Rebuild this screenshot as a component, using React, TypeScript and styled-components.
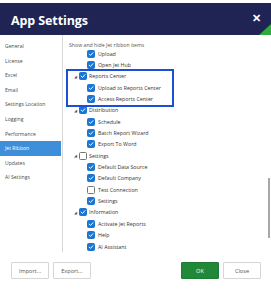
import styled, { createGlobalStyle } from "styled-components";

const GlobalStyle = createGlobalStyle`
  html, body {
    margin: 0;
    padding: 0;
    background: #ffffff;
  }
  body {
    font-family: "Open Sans", "Noto Sans", sans-serif;
  }
`;

const Dialog = styled.div`
  width: 271px;
  height: 290px;
  padding-top: 3px;
  box-sizing: border-box;
  display: flex;
  flex-direction: column;
  background: #ffffff;
  overflow: hidden;
`;

const Header = styled.div`
  position: relative;
  height: 32px;
  flex-shrink: 0;
  background: #1f2454;
  display: flex;
  align-items: center;
  justify-content: space-between;
  padding: 2px 10px 0 11px;
  box-sizing: border-box;
  overflow: hidden;
`;

const Title = styled.h1`
  margin: 0;
  color: #ffffff;
  font-size: 12.5px;
  font-weight: 700;
  letter-spacing: -0.1px;
`;

const CloseX = styled.span`
  color: #ffffff;
  font-size: 11px;
  font-weight: 700;
  margin-top: -5px;
`;

const Corner = styled.div`
  position: absolute;
  right: 0;
  bottom: 0;
  width: 0;
  height: 0;
  border-left: 12px solid transparent;
  border-bottom: 11px solid #2faa3f;
`;

const Body = styled.div`
  display: flex;
  height: 217px;
  flex-shrink: 0;
`;

const Sidebar = styled.nav`
  width: 62px;
  border-right: 1px solid #d8d8d8;
  padding-top: 4px;
  display: flex;
  flex-direction: column;
`;

interface NavItemProps {
  selected?: boolean;
}

const NavItem = styled.div<NavItemProps>`
  height: 14.6px;
  line-height: 14.6px;
  padding-left: 5px;
  font-size: 5.1px;
  color: ${(p) => (p.selected ? "#ffffff" : "#4a4a4a")};
  background: ${(p) => (p.selected ? "#3d8fd9" : "transparent")};
  margin-right: ${(p) => (p.selected ? "1px" : "0")};
  white-space: nowrap;
`;

const Content = styled.div`
  position: relative;
  flex: 1;
  padding: 6px 0 0 6px;
`;

const Caption = styled.div`
  font-size: 5.2px;
  color: #555555;
  height: 7px;
  line-height: 8px;
`;

const Tree = styled.div`
  display: flex;
  flex-direction: column;
`;

interface RowProps {
  level: number;
}

const Row = styled.div<RowProps>`
  display: flex;
  align-items: center;
  gap: ${(p) => (p.level === 0 ? 2 : 3)}px;
  height: 11.35px;
  padding-left: ${(p) => (p.level === 0 ? 4 : 18)}px;
  font-size: 5.3px;
  color: #333333;
  white-space: nowrap;
`;

const Arrow = styled.span`
  width: 4px;
  font-size: 3.6px;
  color: #555555;
  display: inline-block;
  text-align: center;
`;

interface BoxProps {
  checked: boolean;
}

const Box = styled.span<BoxProps>`
  width: 8px;
  height: 8px;
  box-sizing: border-box;
  border-radius: 1.5px;
  background: ${(p) => (p.checked ? "#1a76d2" : "#ffffff")};
  border: 1px solid ${(p) => (p.checked ? "#1a76d2" : "#777777")};
  display: flex;
  align-items: center;
  justify-content: center;
  flex-shrink: 0;
`;

const Highlight = styled.div`
  position: absolute;
  left: 3px;
  top: 34px;
  width: 108px;
  height: 38px;
  border: 2px solid #1b4fd8;
  box-sizing: border-box;
  pointer-events: none;
`;

const Scrollbar = styled.div`
  position: absolute;
  right: 1px;
  top: 143px;
  width: 2px;
  height: 60px;
  background: #a8a8a8;
`;

const Footer = styled.div`
  flex: 1;
  display: flex;
  align-items: flex-start;
  justify-content: space-between;
  padding: 10px 10px 0 11px;
`;

const ButtonGroup = styled.div`
  display: flex;
  gap: 4px;
`;

interface ButtonProps {
  primary?: boolean;
}

const Button = styled.button<ButtonProps>`
  width: 38px;
  height: 17px;
  padding: 0;
  border: 1px solid ${(p) => (p.primary ? "#1f7a36" : "#d6d6d6")};
  border-radius: 1px;
  background: ${(p) => (p.primary ? "#218838" : "#ffffff")};
  color: ${(p) => (p.primary ? "#ffffff" : "#555555")};
  font-family: "Open Sans", "Noto Sans", sans-serif;
  font-size: 5.6px;
`;

function Check() {
  return (
    <svg width="6" height="6" viewBox="0 0 10 10">
      <path
        d="M2 5.2 L4.2 7.4 L8.2 2.8"
        fill="none"
        stroke="#ffffff"
        strokeWidth="1.6"
        strokeLinecap="round"
        strokeLinejoin="round"
      />
    </svg>
  );
}

const navItems = [
  "General",
  "License",
  "Excel",
  "Email",
  "Settings Location",
  "Logging",
  "Performance",
  "Jet Ribbon",
  "Updates",
  "AI Settings",
];

const treeItems: { label: string; level: number; checked: boolean }[] = [
  { label: "Upload", level: 1, checked: true },
  { label: "Open Jet Hub", level: 1, checked: true },
  { label: "Reports Center", level: 0, checked: true },
  { label: "Upload to Reports Center", level: 1, checked: true },
  { label: "Access Reports Center", level: 1, checked: true },
  { label: "Distribution", level: 0, checked: true },
  { label: "Schedule", level: 1, checked: true },
  { label: "Batch Report Wizard", level: 1, checked: true },
  { label: "Export To Word", level: 1, checked: true },
  { label: "Settings", level: 0, checked: false },
  { label: "Default Data Source", level: 1, checked: true },
  { label: "Default Company", level: 1, checked: true },
  { label: "Test Connection", level: 1, checked: false },
  { label: "Settings", level: 1, checked: true },
  { label: "Information", level: 0, checked: true },
  { label: "Activate Jet Reports", level: 1, checked: true },
  { label: "Help", level: 1, checked: true },
  { label: "AI Assistant", level: 1, checked: true },
];

export default function App() {
  return (
    <>
      <GlobalStyle />
      <Dialog>
        <Header>
          <Title>App Settings</Title>
          <CloseX>✕</CloseX>
          <Corner />
        </Header>
        <Body>
          <Sidebar>
            {navItems.map((item) => (
              <NavItem key={item} selected={item === "Jet Ribbon"}>
                {item}
              </NavItem>
            ))}
          </Sidebar>
          <Content>
            <Caption>Show and hide Jet ribbon items</Caption>
            <Tree>
              {treeItems.map((item, i) => (
                <Row key={i} level={item.level}>
                  {item.level === 0 && <Arrow>◢</Arrow>}
                  <Box checked={item.checked}>{item.checked && <Check />}</Box>
                  {item.label}
                </Row>
              ))}
            </Tree>
            <Highlight />
            <Scrollbar />
          </Content>
        </Body>
        <Footer>
          <ButtonGroup>
            <Button>Import...</Button>
            <Button>Export...</Button>
          </ButtonGroup>
          <ButtonGroup>
            <Button primary>OK</Button>
            <Button>Close</Button>
          </ButtonGroup>
        </Footer>
      </Dialog>
    </>
  );
}
